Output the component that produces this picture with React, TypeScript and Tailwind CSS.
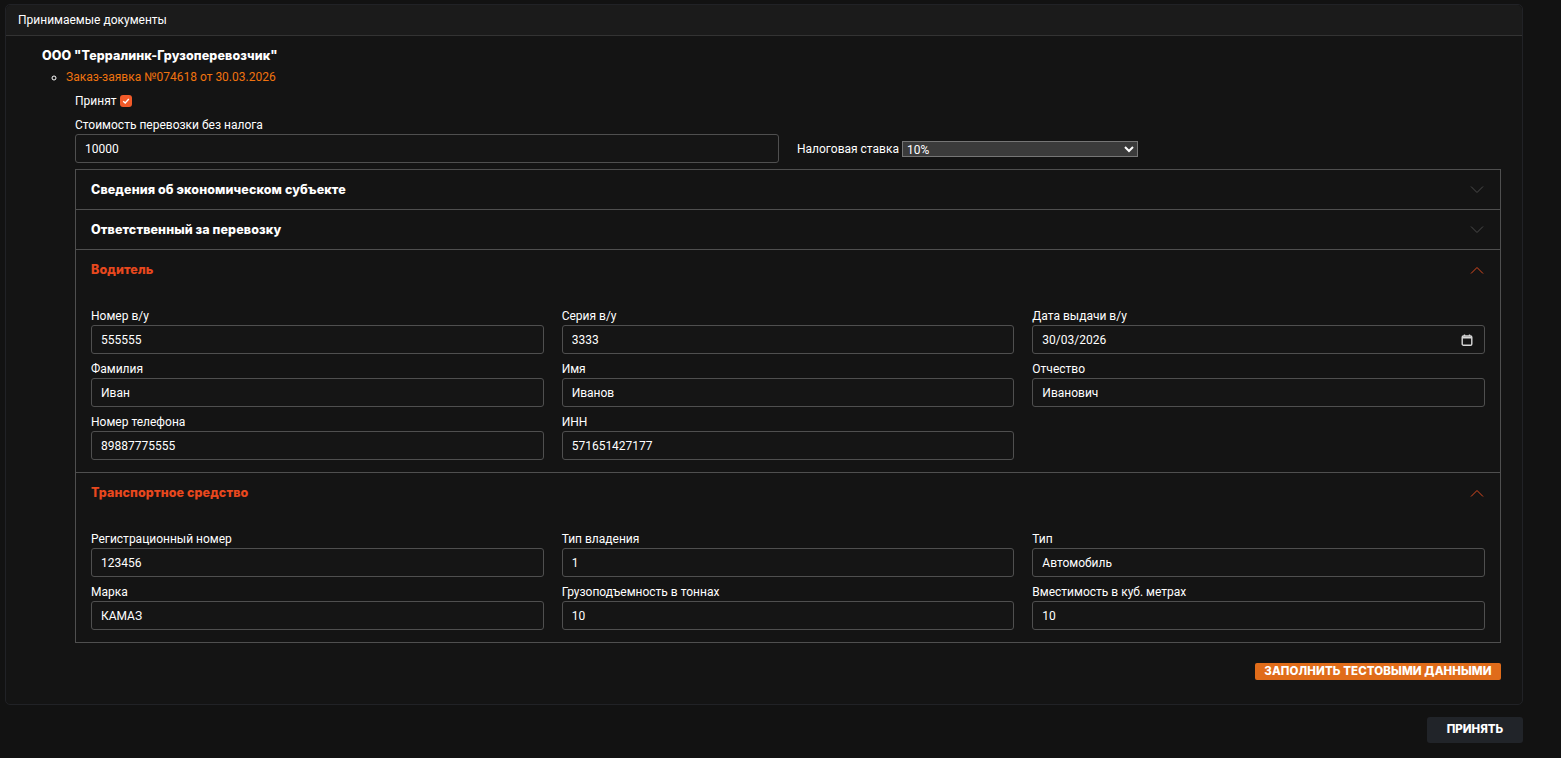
const headingFont = "font-['Inter','Open_Sans',sans-serif]";

const driverFields = [
  { label: "Номер в/у", value: "555555" },
  { label: "Серия в/у", value: "3333" },
  { label: "Дата выдачи в/у", value: "30/03/2026", date: true },
  { label: "Фамилия", value: "Иван" },
  { label: "Имя", value: "Иванов" },
  { label: "Отчество", value: "Иванович" },
  { label: "Номер телефона", value: "89887775555" },
  { label: "ИНН", value: "571651427177" },
];

const vehicleFields = [
  { label: "Регистрационный номер", value: "123456" },
  { label: "Тип владения", value: "1" },
  { label: "Тип", value: "Автомобиль" },
  { label: "Марка", value: "КАМАЗ" },
  { label: "Грузоподъемность в тоннах", value: "10" },
  { label: "Вместимость в куб. метрах", value: "10" },
];

function Chevron({ up }: { up?: boolean }) {
  return (
    <svg width="14" height="8" viewBox="0 0 14 8" fill="none" className={`-translate-x-px ${up ? "text-[#d9481f]" : "text-[#4a4a4a]"}`}>
      <path d={up ? "M1 7.5L7 1.5L13 7.5" : "M1 0.5L7 6.5L13 0.5"} stroke="currentColor" strokeWidth="1" />
    </svg>
  );
}

function Field({ label, value, date }: { label: string; value: string; date?: boolean }) {
  return (
    <div>
      <div className="h-[18px] mb-px pt-px leading-[18px] text-[12px] text-white">{label}</div>
      <div className="h-[29px] flex items-center pl-[9px] pr-[11px] rounded-[3px] border border-[#4f4f4f] bg-[#151515]">
        <input
          readOnly
          value={value}
          className="w-full min-w-0 bg-transparent text-[12px] text-white outline-none"
        />
        {date && (
          <svg width="12" height="12" viewBox="0 0 12 12" fill="none" className="shrink-0">
            <rect x="1.2" y="2" width="9.6" height="9.2" rx="1.2" stroke="#d8d8d8" strokeWidth="1.4" />
            <path d="M1.2 3.6H10.8" stroke="#d8d8d8" strokeWidth="1.8" />
            <path d="M3.5 0.6V2M8.5 0.6V2" stroke="#d8d8d8" strokeWidth="1.4" />
          </svg>
        )}
      </div>
    </div>
  );
}

function Section({
  title,
  open,
  fields,
  last,
}: {
  title: string;
  open?: boolean;
  fields?: { label: string; value: string; date?: boolean }[];
  last?: boolean;
}) {
  return (
    <div className={last ? "" : "border-b border-[#4f4f4f]"}>
      <div className="h-[39px] flex items-center justify-between px-[15px]">
        <span className={`${headingFont} pt-px font-extrabold text-[12.5px] tracking-[0.1px] ${open ? "text-[#e8481e]" : "text-white"}`}>{title}</span>
        <Chevron up={open} />
      </div>
      {open && fields && (
        <div className="grid grid-cols-3 gap-x-[18px] gap-y-[5px] px-[15px] pt-[17px] pb-[12px]">
          {fields.map((f) => (
            <Field key={f.label} {...f} />
          ))}
        </div>
      )}
    </div>
  );
}

export default function App() {
  return (
    <div className="h-[758px] w-full overflow-hidden bg-[#121212] pt-1 pl-[5px] pr-[38px] font-['Roboto',sans-serif] text-white text-[12px]">
      <div className="h-[701px] rounded-[5px] border border-[#212226] bg-[#141414]">
        <div className="h-[31px] flex items-center px-3 rounded-t-[5px] border-b border-[#333333] bg-[#1b1b1b]">
          Принимаемые документы
        </div>

        <div className="pl-[36px] pr-[21px]">
          <div className={`${headingFont} pt-[10px] h-[29px] font-extrabold text-[12.5px] leading-[19px] tracking-[0.1px]`}>ООО "Терралинк-Грузоперевозчик"</div>
          <ul className="pl-6 list-[circle]">
            <li className="h-[22px] leading-[25px] text-[#f0730f] marker:text-white">Заказ-заявка №074618 от 30.03.2026</li>
          </ul>

          <div className="pl-[33px]">
            <div className="h-[24px] pt-[3px] flex items-center gap-[3px]">
              Принят
              <span className="flex h-3 w-3 items-center justify-center rounded-[3px] bg-[#f15a29]">
                <svg width="8" height="8" viewBox="0 0 8 8" fill="none">
                  <path d="M1.2 4.2L3.2 6L6.8 2" stroke="#ffffff" strokeWidth="1.4" />
                </svg>
              </span>
            </div>
            <div className="h-[23px] flex items-end leading-[18px]">Стоимость перевозки без налога</div>
            <div className="flex items-center gap-[18px]">
              <input
                readOnly
                value="10000"
                className="w-[704px] h-[29px] px-[9px] rounded-[3px] border border-[#4f4f4f] bg-[#151515] text-[12px] text-white outline-none"
              />
              <div className="flex items-center gap-[3px]">
                Налоговая ставка
                <select
                  defaultValue="10%"
                  className="w-[236px] h-[16px] bg-[#3b3b3b] border border-[#767676] text-[12px] leading-[14px] text-white [color-scheme:dark]"
                >
                  <option>10%</option>
                  <option>20%</option>
                </select>
              </div>
            </div>

            <div className="mt-[6px] border border-[#4f4f4f]">
              <Section title="Сведения об экономическом субъекте" />
              <Section title="Ответственный за перевозку" />
              <Section title="Водитель" open fields={driverFields} />
              <Section title="Транспортное средство" open fields={vehicleFields} last />
            </div>

            <div className="mt-5 flex justify-end">
              <button className={`${headingFont} h-[17px] w-[246px] pb-px rounded-[2px] bg-[#e06c1a] text-[11.5px] font-extrabold leading-[15px] tracking-[0.1px] text-white`}>
                ЗАПОЛНИТЬ ТЕСТОВЫМИ ДАННЫМИ
              </button>
            </div>
          </div>
        </div>
      </div>

      <div className="mt-3 flex justify-end">
        <button className={`${headingFont} h-[26px] w-[96px] pb-px rounded-[3px] bg-[#212429] text-[11.5px] font-extrabold text-white`}>
          ПРИНЯТЬ
        </button>
      </div>
    </div>
  );
}
